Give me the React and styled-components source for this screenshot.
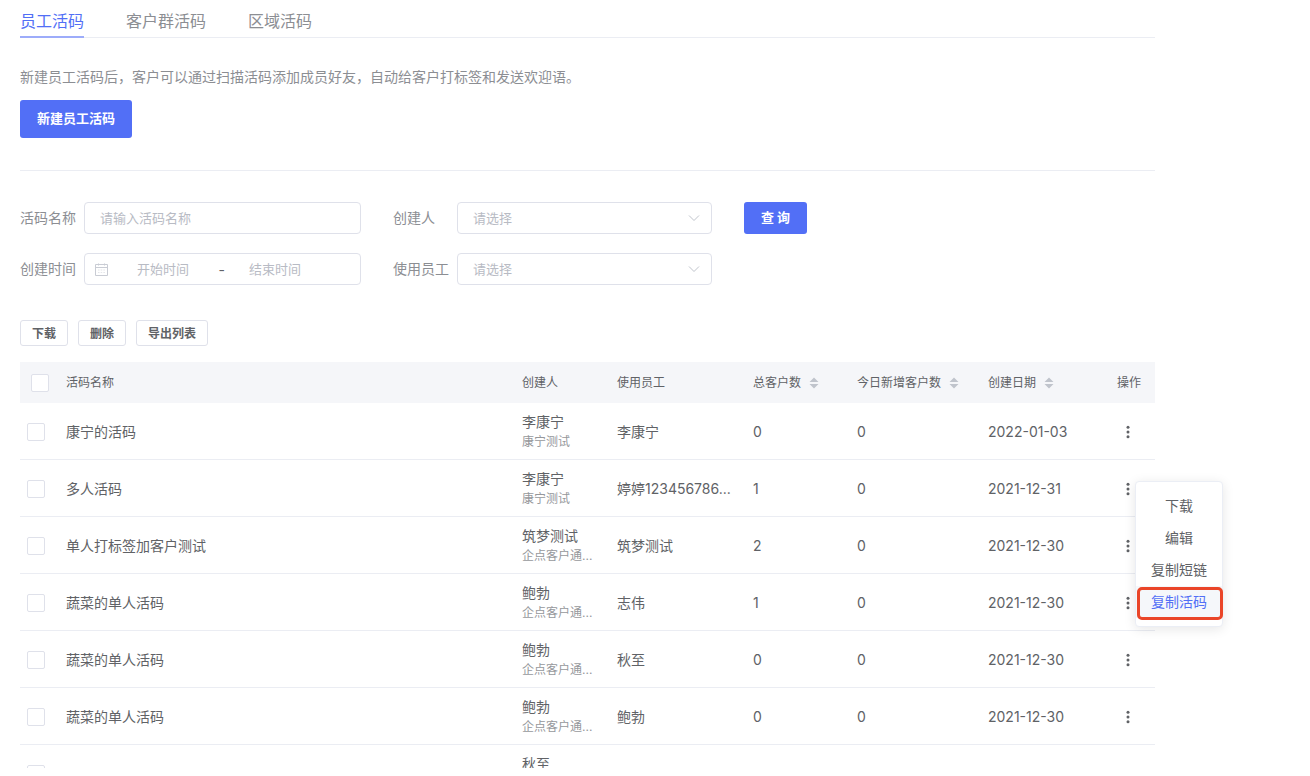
import React from "react"
import styled, { createGlobalStyle } from "styled-components"

const GlobalStyle = createGlobalStyle`
  :root {
    --color-primary: #526ff6;
    --color-text: #606266;
    --color-muted: #8c8e93;
    --color-placeholder: #b8bbc4;
    --color-border: #dfe1ea;
    --color-line: #ebedf3;
  }

  * {
    box-sizing: border-box;
  }

  body {
    margin: 0;
    background: #fff;
    color: var(--color-text);
  }

  body, button, input, select {
    font-family: Inter, "Noto Sans CJK SC", sans-serif;
  }
`

const Page = styled.main`
  height: calc(100vh - 8px);
  padding: 0 155px 0 20px;
  overflow: hidden;
`

const Tabs = styled.nav`
  display: flex;
  gap: 42px;
  height: 38px;
  border-bottom: 1px solid var(--color-line);
`

const Tab = styled.a`
  height: 38px;
  padding-top: 9px;
  border-bottom: 2px solid ${(p) => (p.$active ? "#9dacfa" : "transparent")};
  color: ${(p) => (p.$active ? "var(--color-primary)" : "var(--color-muted)")};
  font-size: 16px;
  line-height: 24px;
  text-decoration: none;
`

const Intro = styled.section`
  padding: 29px 0 32px;
  border-bottom: 1px solid var(--color-line);
`

const Description = styled.p`
  margin: 0 0 13px;
  color: var(--color-muted);
  font-size: 14px;
  line-height: 20px;
`

const PrimaryButton = styled.button`
  height: ${(p) => (p.$large ? "38px" : "32px")};
  padding: 0 17px 3px;
  border: 0;
  border-radius: 3px;
  background: var(--color-primary);
  color: #fff;
  font-size: 13px;
  font-weight: 700;
`

const Filters = styled.form`
  display: grid;
  grid-template-columns: minmax(0, 341px) minmax(0, 319px) auto;
  gap: 19px 32px;
  justify-content: start;
  align-items: center;
  padding: 31px 0 35px;
`

const Field = styled.div`
  display: flex;
  align-items: center;
`

const Label = styled.label`
  flex: 0 0 64px;
  color: var(--color-muted);
  font-size: 14px;
  line-height: 20px;
`

const Control = styled.div`
  position: relative;
  display: flex;
  align-items: center;
  flex: 1;
  min-width: 0;
  height: 32px;
  border: 1px solid var(--color-border);
  border-radius: 4px;
  background: #fff;
`

const DateControl = styled(Control)`
  padding: 0 35px 0 10px;
`

const Input = styled.input`
  flex: 1;
  min-width: 0;
  width: 100%;
  height: 100%;
  padding: ${(p) => (p.$center ? "0" : "0 15px")};
  border: 0;
  outline: 0;
  background: none;
  color: var(--color-text);
  font-size: 13px;
  text-align: ${(p) => (p.$center ? "center" : "left")};

  &::placeholder {
    color: var(--color-placeholder);
    opacity: 1;
  }
`

const Separator = styled.span`
  flex: 0 0 12px;
  font-size: 14px;
  text-align: right;
`

const Select = styled.select`
  appearance: none;
  width: 100%;
  height: 100%;
  padding: 0 32px 0 15px;
  border: 0;
  outline: 0;
  background: none;
  color: var(--color-placeholder);
  font-size: 13px;
`

const Chevron = styled.svg`
  position: absolute;
  right: 11px;
  pointer-events: none;
`

const CalendarSvg = styled.svg`
  flex: none;
  margin-right: 5px;
`

const Toolbar = styled.div`
  display: flex;
  gap: 10px;
  margin-bottom: 16px;
`

const SmallButton = styled.button`
  height: 26px;
  padding: 0 11px 2px;
  border: 1px solid var(--color-border);
  border-radius: 3px;
  background: #fff;
  color: var(--color-text);
  font-size: 12px;
  font-weight: 700;
`

const Table = styled.table`
  width: 100%;
  table-layout: fixed;
  border-collapse: separate;
  border-spacing: 0;
`

const Col = styled.col`
  width: ${(p) => p.$width};
`

const Th = styled.th`
  height: 41px;
  padding: 0 0 0 ${(p) => (p.$check ? "11px" : "10px")};
  background: #f5f6f9;
  font-size: 12px;
  font-weight: 400;
  line-height: 18px;
  text-align: left;
  white-space: nowrap;
`

const Td = styled.td`
  height: 57px;
  padding: 2px 0 0 ${(p) => (p.$check ? "7px" : "10px")};
  border-bottom: 1px solid var(--color-line);
  font-size: 14px;
  line-height: 20px;
  white-space: nowrap;
`

const Checkbox = styled.input`
  appearance: none;
  display: block;
  width: 18px;
  height: 18px;
  margin: 0;
  border: 1px solid var(--color-border);
  border-radius: 2px;
  background: #fff;

  &:checked {
    border-color: var(--color-primary);
    background: var(--color-primary);
  }
`

const SortButton = styled.button`
  display: flex;
  align-items: center;
  gap: 8px;
  padding: 0;
  border: 0;
  background: none;
  color: inherit;
  font-size: 12px;
  line-height: 18px;
`

const Company = styled.div`
  color: #96989c;
  font-size: 12px;
  line-height: 20px;
`

const Actions = styled.div`
  position: relative;
  width: 22px;
`

const MoreButton = styled.button`
  display: flex;
  align-items: center;
  justify-content: center;
  width: 22px;
  height: 20px;
  padding: 0;
  border: 0;
  background: none;
  color: var(--color-text);
`

const Menu = styled.div`
  position: absolute;
  z-index: 1;
  top: 2px;
  left: 18px;
  width: 88px;
  padding: 8px 0;
  border: 1px solid #ebeef5;
  border-radius: 4px;
  background: #fff;
  box-shadow: 0 2px 12px rgba(0, 0, 0, 0.1);
`

const MenuItem = styled.button`
  position: relative;
  display: block;
  width: 100%;
  height: 32px;
  padding: 0;
  border: 0;
  background: ${(p) => (p.$active ? "#f5f7fa" : "none")};
  color: ${(p) => (p.$active ? "var(--color-primary)" : "var(--color-text)")};
  font-size: 14px;
  line-height: 32px;

  ${(p) =>
    p.$active &&
    `&::after {
      content: "";
      position: absolute;
      inset: 1px -1px -2px 1px;
      border: 3px solid #ea4528;
      border-radius: 5px;
    }`}
`

const tabs = ["员工活码", "客户群活码", "区域活码"]

const menuItems = ["下载", "编辑", "复制短链", "复制活码"]

const rows = [
  ["康宁的活码", "李康宁", "康宁测试", "李康宁", 0, 0, "2022-01-03"],
  ["多人活码", "李康宁", "康宁测试", "婷婷123456786...", 1, 0, "2021-12-31"],
  ["单人打标签加客户测试", "筑梦测试", "企点客户通...", "筑梦测试", 2, 0, "2021-12-30"],
  ["蔬菜的单人活码", "鲍勃", "企点客户通...", "志伟", 1, 0, "2021-12-30"],
  ["蔬菜的单人活码", "鲍勃", "企点客户通...", "秋至", 0, 0, "2021-12-30"],
  ["蔬菜的单人活码", "鲍勃", "企点客户通...", "鲍勃", 0, 0, "2021-12-30"],
  ["", "秋至", "", "", "", "", ""],
]

const ChevronIcon = () => (
  <Chevron width="12" height="8" viewBox="0 0 12 8" fill="none" stroke="#c0c4cc">
    <path d="M1 1.5l5 5 5-5" />
  </Chevron>
)

const CalendarIcon = () => (
  <CalendarSvg width="13" height="13" viewBox="0 0 13 13" fill="none" stroke="#c9ccd4">
    <path d="M.5 1.5h12v11H.5zM.5 4.5h12M3.5 .5v2M9.5 .5v2" />
    <path d="M3 7h7M3 9.5h7" strokeDasharray="1.5 1.2" opacity=".5" />
  </CalendarSvg>
)

const SortIcon = () => (
  <svg width="10" height="12" viewBox="0 0 10 12" fill="#c0c4cc">
    <path d="M5 .5l4.5 4.5h-9zM5 11.5l4.5-4.5h-9z" />
  </svg>
)

const MoreIcon = () => (
  <svg width="4" height="14" viewBox="0 0 4 14" fill="currentColor">
    <circle cx="2" cy="2.2" r="1.5" />
    <circle cx="2" cy="7" r="1.5" />
    <circle cx="2" cy="11.8" r="1.5" />
  </svg>
)

const SelectField = ({ id, label }) => (
  <Field>
    <Label htmlFor={id}>{label}</Label>
    <Control>
      <Select id={id}>
        <option>请选择</option>
      </Select>
      <ChevronIcon />
    </Control>
  </Field>
)

const SortTh = ({ children }) => (
  <Th>
    <SortButton type="button">
      {children}
      <SortIcon />
    </SortButton>
  </Th>
)

const Row = ({ row, open }) => {
  const [name, creator, company, staff, total, today, date] = row

  return (
    <tr>
      <Td $check>
        <Checkbox type="checkbox" aria-label={name || creator} />
      </Td>
      <Td>{name}</Td>
      <Td>
        {creator}
        <Company>{company || "\u00a0"}</Company>
      </Td>
      <Td>{staff}</Td>
      <Td>{total}</Td>
      <Td>{today}</Td>
      <Td>{date}</Td>
      <Td>
        {date && (
          <Actions>
            <MoreButton type="button" aria-label="操作">
              <MoreIcon />
            </MoreButton>
            {open && (
              <Menu>
                {menuItems.map((item) => (
                  <MenuItem key={item} type="button" $active={item === "复制活码"}>
                    {item}
                  </MenuItem>
                ))}
              </Menu>
            )}
          </Actions>
        )}
      </Td>
    </tr>
  )
}

const App = () => (
  <>
    <GlobalStyle />
    <Page>
      <Tabs>
        {tabs.map((tab, i) => (
          <Tab key={tab} href="#" $active={i === 0}>
            {tab}
          </Tab>
        ))}
      </Tabs>

      <Intro>
        <Description>
          新建员工活码后，客户可以通过扫描活码添加成员好友，自动给客户打标签和发送欢迎语。
        </Description>
        <PrimaryButton type="button" $large>
          新建员工活码
        </PrimaryButton>
      </Intro>

      <Filters>
        <Field>
          <Label htmlFor="name">活码名称</Label>
          <Control>
            <Input id="name" placeholder="请输入活码名称" />
          </Control>
        </Field>
        <SelectField id="creator" label="创建人" />
        <PrimaryButton type="button">查 询</PrimaryButton>
        <Field>
          <Label htmlFor="start">创建时间</Label>
          <DateControl>
            <CalendarIcon />
            <Input id="start" placeholder="开始时间" $center />
            <Separator>-</Separator>
            <Input aria-label="结束时间" placeholder="结束时间" $center />
          </DateControl>
        </Field>
        <SelectField id="staff" label="使用员工" />
      </Filters>

      <Toolbar>
        <SmallButton type="button">下载</SmallButton>
        <SmallButton type="button">删除</SmallButton>
        <SmallButton type="button">导出列表</SmallButton>
      </Toolbar>

      <Table>
        <colgroup>
          <Col $width="36px" />
          <Col $width="auto" />
          <Col $width="95px" />
          <Col $width="136px" />
          <Col $width="104px" />
          <Col $width="131px" />
          <Col $width="129px" />
          <Col $width="48px" />
        </colgroup>
        <thead>
          <tr>
            <Th $check>
              <Checkbox type="checkbox" aria-label="全选" />
            </Th>
            <Th>活码名称</Th>
            <Th>创建人</Th>
            <Th>使用员工</Th>
            <SortTh>总客户数</SortTh>
            <SortTh>今日新增客户数</SortTh>
            <SortTh>创建日期</SortTh>
            <Th>操作</Th>
          </tr>
        </thead>
        <tbody>
          {rows.map((row, i) => (
            <Row key={i} row={row} open={i === 1} />
          ))}
        </tbody>
      </Table>
    </Page>
  </>
)

export default App
